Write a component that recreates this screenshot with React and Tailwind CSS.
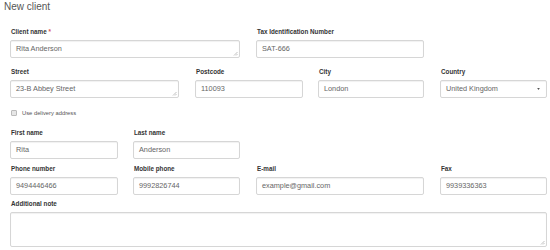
import React from "react";

const inputCls =
  "relative h-[18px] border border-[#d6d6d6] rounded-[2px] bg-white shadow-[inset_0_1px_1px_rgba(0,0,0,0.06)] flex items-center pl-[5px] text-[7.3px] text-[#666]";

function Grip() {
  return (
    <svg className="absolute right-[1px] bottom-[1px]" width="5" height="5" viewBox="0 0 5 5">
      <path d="M4.5 1 L1 4.5 M4.5 3 L3 4.5" stroke="#999" strokeWidth="0.6" />
    </svg>
  );
}

function Field({ label, value, width, className = "", required, grip, select, height }) {
  return (
    <div className={`flex flex-col shrink-0 ${className}`} style={{ width }}>
      <label className="h-[8px] leading-[8px] mb-[4px] pl-[1px] text-[6.3px] font-bold text-[#333]">
        {label}
        {required && <span className="text-[#d9534f]"> *</span>}
      </label>
      <div className={inputCls} style={height ? { height } : undefined}>
        {value}
        {grip && <Grip />}
        {select && (
          <svg className="absolute right-[6px] top-[7px]" width="3" height="2" viewBox="0 0 4 3">
            <path d="M0 0 H4 L2 3 Z" fill="#555" />
          </svg>
        )}
      </div>
    </div>
  );
}

export default function App() {
  return (
    <div className="w-[550px] h-[250px] bg-white overflow-hidden font-['Liberation_Sans',Arial,sans-serif]">
      <h1 className="pl-[4px] pt-[1px] h-[13px] text-[10px] leading-[12px] text-[#555]">New client</h1>
      <div className="pl-[10px]">
        {/* Client name / Tax ID */}
        <div className="flex mt-[15px]">
          <Field label="Client name" required value="Rita Anderson" width={230} grip />
          <Field label="Tax Identification Number" value="SAT-666" width={168} className="ml-[16px]" />
        </div>

        {/* Address */}
        <div className="flex mt-[10px]">
          <Field label="Street" value="23-B Abbey Street" width={169} grip />
          <Field label="Postcode" value="110093" width={108} className="ml-[16px]" />
          <Field label="City" value="London" width={106} className="ml-[15px]" />
          <Field label="Country" value="United Kingdom" width={107} className="ml-[16px]" select />
        </div>

        {/* Delivery checkbox */}
        <div className="flex items-center h-[8px] mt-[11px]">
          <span className="w-[6px] h-[6px] ml-[1px] border border-[#bbb] bg-[#e6e6e6] rounded-[1px]" />
          <span className="ml-[5px] text-[5.8px] text-[#555]">Use delivery address</span>
        </div>

        {/* Names */}
        <div className="flex mt-[12px]">
          <Field label="First name" value="Rita" width={108} />
          <Field label="Last name" value="Anderson" width={107} className="ml-[15px]" />
        </div>

        {/* Contact */}
        <div className="flex mt-[6px]">
          <Field label="Phone number" value="9494446466" width={108} />
          <Field label="Mobile phone" value="9992826744" width={107} className="ml-[15px]" />
          <Field label="E-mail" value="example@gmail.com" width={168} className="ml-[16px]" />
          <Field label="Fax" value="9939336363" width={107} className="ml-[16px]" />
        </div>

        {/* Note */}
        <div className="flex mt-[5px]">
          <Field label="Additional note" value="" width={537} height={35} grip />
        </div>
      </div>
    </div>
  );
}
